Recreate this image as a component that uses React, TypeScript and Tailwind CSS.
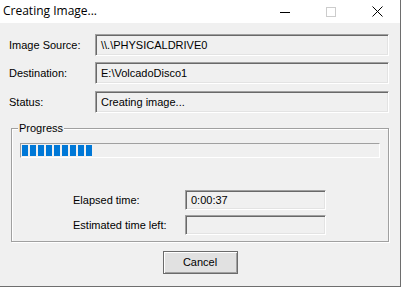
import React from "react";

const field =
  "border border-t-[#a0a0a0] border-l-[#a0a0a0] border-b-white border-r-white shadow-[inset_1px_1px_0_#696969,inset_-1px_-1px_0_#e3e3e3] bg-[#f0f0f0] flex items-center pl-[5px] text-[11px] text-black";

function Row({ label, value, top }: { label: string; value: string; top: string }) {
  return (
    <div className={`flex items-center ${top}`}>
      <div className="w-[86px] text-[11px]">{label}</div>
      <div className={`${field} w-[294px] h-[22px]`}>{value}</div>
    </div>
  );
}

export default function App() {
  const blocks = Array.from({ length: 9 });
  return (
    <div
      className="w-[401px] h-[287px] flex flex-col bg-white text-black overflow-hidden"
      style={{ fontFamily: '"Liberation Sans", Arial, sans-serif' }}
    >
      {/* Title bar */}
      <div className="h-[23px] flex items-center bg-white border-r border-[#6e6e6e]">
        <div
          className="pl-[3px] text-[12px] flex-1 -mt-[1px]"
          style={{ fontFamily: '"Open Sans", "Noto Sans", sans-serif' }}
        >
          Creating Image...
        </div>
        <div className="flex items-center">
          <div className="w-[46px] flex justify-center">
            <svg width="10" height="10" viewBox="0 0 10 10">
              <line x1="0" y1="5.5" x2="10" y2="5.5" stroke="#000" strokeWidth="1" />
            </svg>
          </div>
          <div className="w-[46px] flex justify-center">
            <svg width="10" height="10" viewBox="0 0 10 10">
              <rect x="0.5" y="0.5" width="9" height="9" fill="none" stroke="#cccccc" strokeWidth="1" />
            </svg>
          </div>
          <div className="w-[46px] flex justify-center">
            <svg width="11" height="11" viewBox="0 0 11 11">
              <path d="M0.5 0.5 L10.5 10.5 M10.5 0.5 L0.5 10.5" stroke="#000" strokeWidth="1" fill="none" />
            </svg>
          </div>
        </div>
      </div>

      {/* Body */}
      <div className="flex-1 bg-[#f0f0f0] border-r border-b border-[#6e6e6e] flex flex-col pl-[9px]">
        <Row label="Image Source:" value={"\\\\.\\PHYSICALDRIVE0"} top="mt-[11px]" />
        <Row label="Destination:" value={"E:\\VolcadoDisco1"} top="mt-[6px]" />
        <Row label="Status:" value="Creating image..." top="mt-[7px]" />

        {/* Group box */}
        <div className="relative ml-[2px] mt-[15px] w-[378px] h-[114px] border border-[#a0a0a0] shadow-[1px_1px_0_#fff,inset_1px_1px_0_#fff] flex flex-col">
          <div className="absolute left-[6px] top-[-8px] px-[1px] bg-[#f0f0f0] text-[11px] leading-[14px]">
            Progress
          </div>
          <div className="mt-[14px] ml-[8px] w-[360px] h-[15px] border border-t-[#a0a0a0] border-l-[#a0a0a0] border-b-white border-r-white flex items-center gap-[2px] pl-[1px]">
            {blocks.map((_, i) => (
              <div key={i} className="w-[6px] h-[11px] bg-[#0078d7]" />
            ))}
          </div>
          <div className="flex items-center mt-[32px] ml-[61px]">
            <div className="w-[112px] text-[11px]">Elapsed time:</div>
            <div className={`${field} w-[141px] h-[20px]`}>0:00:37</div>
          </div>
          <div className="flex items-center mt-[5px] ml-[61px]">
            <div className="w-[112px] text-[11px]">Estimated time left:</div>
            <div className={`${field} w-[141px] h-[20px]`}></div>
          </div>
        </div>

        <div className="flex justify-center mt-[9px] pr-[9px]">
          <button className="w-[75px] h-[23px] border border-[#6b6b6b] bg-[#e1e1e1] shadow-[inset_1px_1px_0_#fff,inset_-1px_-1px_0_#a0a0a0] text-[11px] flex items-center justify-center">
            Cancel
          </button>
        </div>
      </div>
    </div>
  );
}
